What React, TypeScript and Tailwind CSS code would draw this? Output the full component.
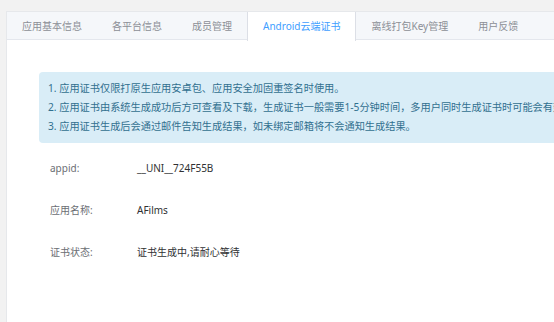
const tabs = ['应用基本信息', '各平台信息', '成员管理', 'Android云端证书', '离线打包Key管理', '用户反馈'];
const active = 'Android云端证书';

const notes = [
  '1. 应用证书仅限打原生应用安卓包、应用安全加固重签名时使用。',
  '2. 应用证书由系统生成成功后方可查看及下载，生成证书一般需要1-5分钟时间，多用户同时生成证书时可能会有延迟，请耐心等待。',
  '3. 应用证书生成后会通过邮件告知生成结果，如未绑定邮箱将不会通知生成结果。',
];

const fields = [
  { label: 'appid:', value: '__UNI__724F55B' },
  { label: '应用名称:', value: 'AFilms' },
  { label: '证书状态:', value: '证书生成中,请耐心等待' },
];

export default function App() {
  return (
    <div
      className="w-[554px] h-[322px] overflow-hidden bg-[#f2f2f2] pt-[11px] pl-[6px]"
      style={{ fontFamily: '"Noto Sans", "Noto Sans CJK SC", sans-serif' }}
    >
      <div className="w-[620px] h-full bg-white border-l border-t border-[#e6e8eb]">
        <div className="flex h-[28px] bg-[#f5f7fa] border-b border-[#e4e7ed]">
          {tabs.map(t => (
            <div
              key={t}
              className={`flex items-center text-[10px] whitespace-nowrap ${
                t === active
                  ? 'h-[29px] -mb-px px-[15px] bg-white text-[#409eff] border-x border-[#dcdfe6]'
                  : 'h-[28px] px-[15px] text-[#8c8f96]'
              }`}
            >
              {t}
            </div>
          ))}
        </div>

        <div className="pt-[32px] pl-[32px]">
          <div className="w-[560px] bg-[#d9edf7] text-[#31708f] rounded-[4px] px-[9px] py-[7px] text-[10.2px] leading-[19px]">
            {notes.map(n => (
              <p key={n} className="whitespace-nowrap">{n}</p>
            ))}
          </div>

          <div className="mt-[4px]">
            {fields.map(f => (
              <div key={f.label} className="flex items-center h-[42px] text-[10px]">
                <span className="w-[98px] pl-[11px] text-[#6b6e74]">{f.label}</span>
                <span className="text-[#303133]">{f.value}</span>
              </div>
            ))}
          </div>
        </div>
      </div>
    </div>
  );
}
